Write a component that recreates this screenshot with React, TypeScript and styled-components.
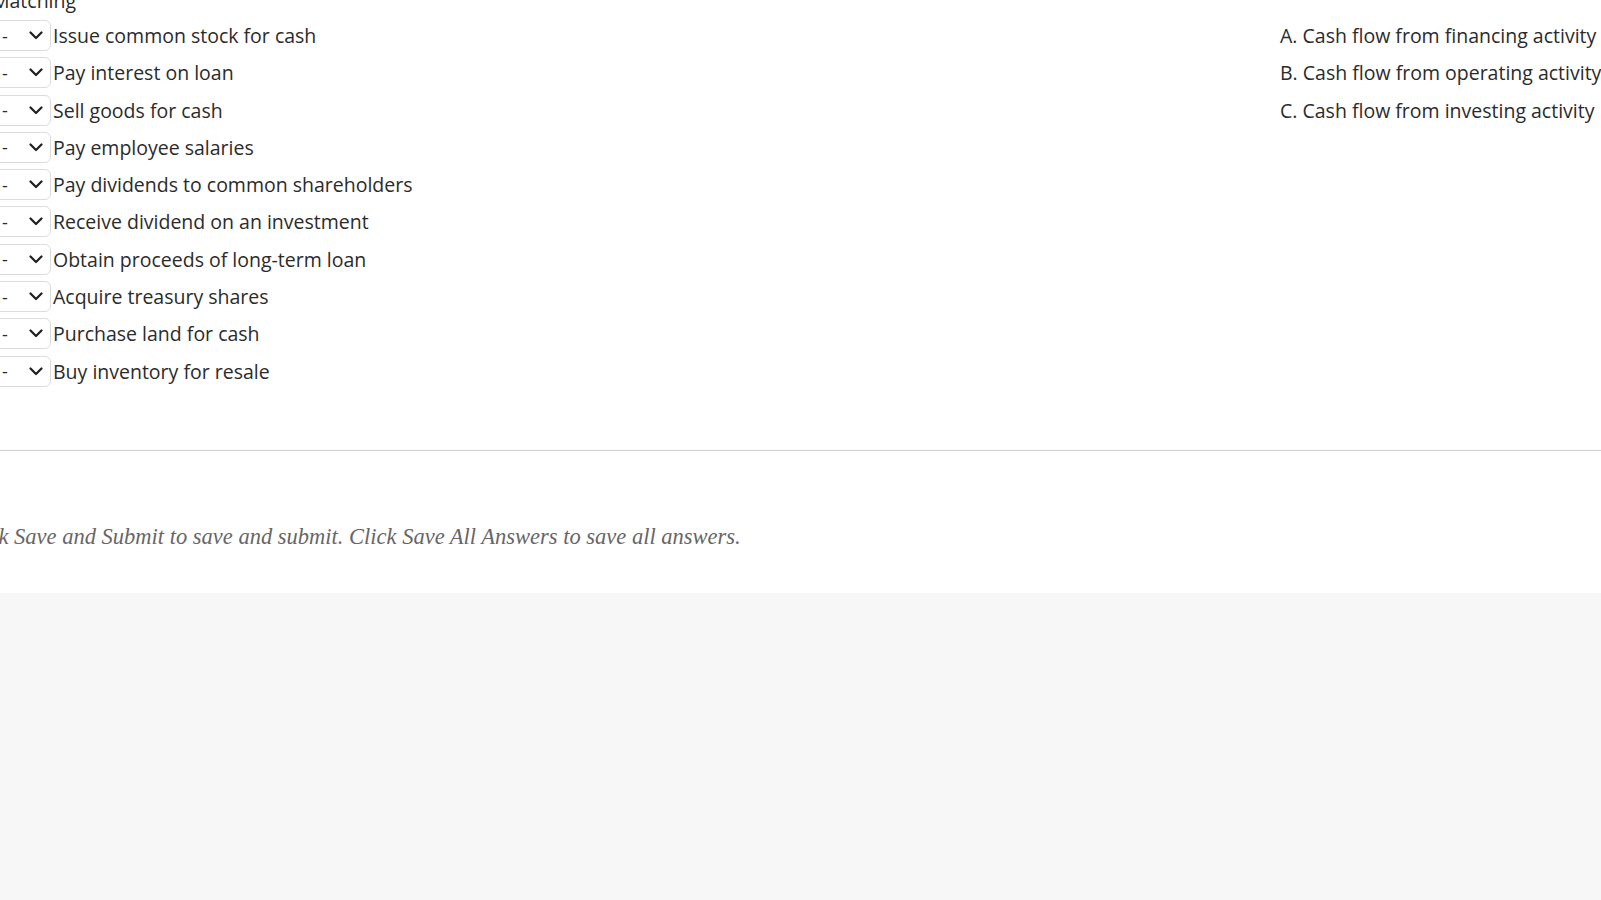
import styled, { createGlobalStyle } from "styled-components";

const GlobalStyle = createGlobalStyle`
  html, body {
    margin: 0;
    padding: 0;
    background: #f7f7f7;
  }
  body {
    font-family: "Open Sans", "Liberation Sans", sans-serif;
    color: #2b2b2b;
    overflow: hidden;
  }
`;

const statements = [
  "Issue common stock for cash",
  "Pay interest on loan",
  "Sell goods for cash",
  "Pay employee salaries",
  "Pay dividends to common shareholders",
  "Receive dividend on an investment",
  "Obtain proceeds of long-term loan",
  "Acquire treasury shares",
  "Purchase land for cash",
  "Buy inventory for resale",
];

const answers = [
  { key: "A.", label: "Cash flow from financing activity" },
  { key: "B.", label: "Cash flow from operating activity" },
  { key: "C.", label: "Cash flow from investing activity" },
];

const Chevron = () => (
  <svg width="14" height="9" viewBox="0 0 14 9" fill="none">
    <polyline
      points="1.5,1.5 7,7 12.5,1.5"
      stroke="#1f1f1f"
      strokeWidth="2.2"
      strokeLinecap="round"
      strokeLinejoin="round"
    />
  </svg>
);

const App = () => {
  return (
    <>
      <GlobalStyle />
      <QuestionPanel>
        <Heading>Matching</Heading>
        <MatchGrid>
          <StatementList>
            {statements.map((s) => (
              <StatementRow key={s}>
                <SelectWrap>
                  <AnswerSelect defaultValue="-">
                    <option value="-">-</option>
                    {answers.map((a) => (
                      <option key={a.key} value={a.key}>
                        {a.key.replace(".", "")}
                      </option>
                    ))}
                  </AnswerSelect>
                  <ChevronSlot>
                    <Chevron />
                  </ChevronSlot>
                </SelectWrap>
                <StatementText>{s}</StatementText>
              </StatementRow>
            ))}
          </StatementList>
          <AnswerList>
            {answers.map((a) => (
              <AnswerRow key={a.key}>
                {a.key} {a.label}
              </AnswerRow>
            ))}
          </AnswerList>
        </MatchGrid>
        <Divider />
        <Instructions>
          Click Save and Submit to save and submit. Click Save All Answers to
          save all answers.
        </Instructions>
      </QuestionPanel>
    </>
  );
};

export default App;

const QuestionPanel = styled.div`
  background: #ffffff;
  height: 593px;
  overflow: hidden;
`;

const Heading = styled.h2`
  margin: -13px 0 13px -8px;
  font-size: 19.5px;
  font-weight: 400;
  line-height: 27px;
  height: 20px;
`;

const MatchGrid = styled.div`
  display: grid;
  grid-template-columns: 1292px 1fr;
  margin-left: -12px;
`;

const StatementList = styled.div`
  display: flex;
  flex-direction: column;
  gap: 6.3px;
`;

const StatementRow = styled.div`
  display: flex;
  align-items: center;
  gap: 2px;
  height: 31px;
`;

const SelectWrap = styled.div`
  position: relative;
  display: inline-flex;
`;

const AnswerSelect = styled.select`
  appearance: none;
  width: 63px;
  height: 31px;
  box-sizing: border-box;
  border: 1px solid #dcdcdc;
  border-radius: 6px;
  background: #ffffff;
  padding: 0 0 0 13px;
  font-family: "Open Sans", "Liberation Sans", sans-serif;
  font-size: 18px;
  color: #2b2b2b;
`;

const ChevronSlot = styled.span`
  position: absolute;
  right: 8px;
  top: 11px;
  display: flex;
  pointer-events: none;
`;

const StatementText = styled.span`
  font-size: 19.5px;
  line-height: 27px;
  white-space: nowrap;
`;

const AnswerList = styled.div`
  display: flex;
  flex-direction: column;
  gap: 6.3px;
`;

const AnswerRow = styled.div`
  display: flex;
  align-items: center;
  height: 31px;
  font-size: 19.5px;
  white-space: pre;
`;

const Divider = styled.hr`
  margin: 63px 0 0;
  border: 0;
  border-top: 1px solid #cfcfcf;
  height: 0;
`;

const Instructions = styled.p`
  margin: 73px 0 0 -39px;
  font-family: "Liberation Serif", "DejaVu Serif", serif;
  font-style: italic;
  font-size: 22.5px;
  color: #666666;
  white-space: nowrap;
`;
